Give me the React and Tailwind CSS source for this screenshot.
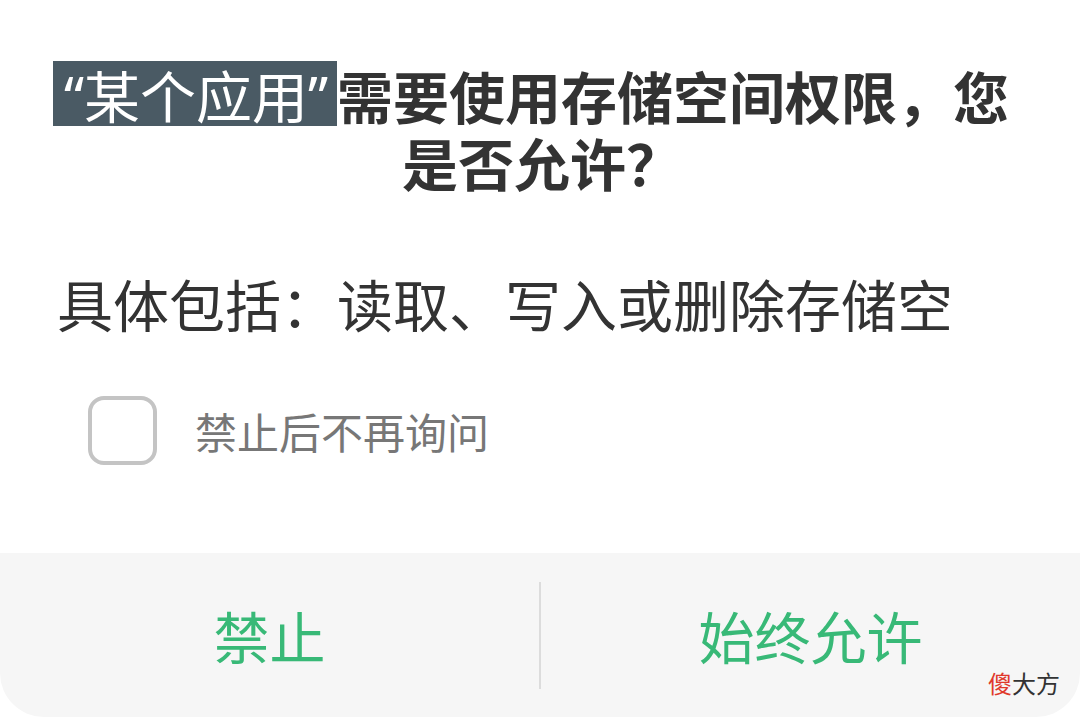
import React from "react";

const FONT = { fontFamily: '"Noto Sans CJK SC", "Noto Sans", sans-serif' };
const LATIN = { fontFamily: '"Noto Sans", "Noto Sans CJK SC", sans-serif' };

export default function App() {
  return (
    <div className="relative w-[1080px] h-[717px] bg-white flex flex-col overflow-hidden" style={FONT}>
      {/* title */}
      <div className="pt-[61px] pl-[40px] pr-[58px] text-center text-[56px] leading-[67px] font-bold text-[#333333] whitespace-nowrap">
        <div>
          <span className="inline-block h-[65px] leading-[65px] align-top bg-[#4a5a64] text-white font-normal">
            <span className="inline-block w-[31px] text-right" style={LATIN}>“</span>某个应用<span className="inline-block w-[29px] text-left" style={LATIN}>”</span>
          </span>
          需要使用存储空间权限，您
        </div>
        <div className="pl-[22px]">是否允许？</div>
      </div>

      {/* details */}
      <p className="mt-[74px] pl-[57px] text-[56px] leading-[67px] text-[#333333]">
        具体包括：读取、写入或删除存储空
      </p>

      {/* checkbox */}
      <label className="mt-[60px] ml-[88px] flex items-center gap-[38px]">
        <span className="w-[69px] h-[69px] rounded-[16px] border-[4px] border-[#c4c4c4] bg-white" />
        <span className="text-[42px] leading-none text-[#777777]">禁止后不再询问</span>
      </label>

      {/* buttons */}
      <div className="mt-auto h-[164px] bg-[#f6f6f6] rounded-b-[44px] flex items-center">
        <button className="flex-1 h-full flex items-center justify-center text-[56px] text-[#38b977]">禁止</button>
        <div className="w-[2px] h-[107px] bg-[#dcdcdc]" />
        <button className="flex-1 h-full flex items-center justify-center text-[56px] text-[#38b977]">始终允许</button>
      </div>

      {/* watermark */}
      <div className="absolute right-[20px] bottom-[22px] text-[24px] leading-none text-[#333333]">
        <span className="text-[#e0392b]">傻</span>大方
      </div>
    </div>
  );
}
